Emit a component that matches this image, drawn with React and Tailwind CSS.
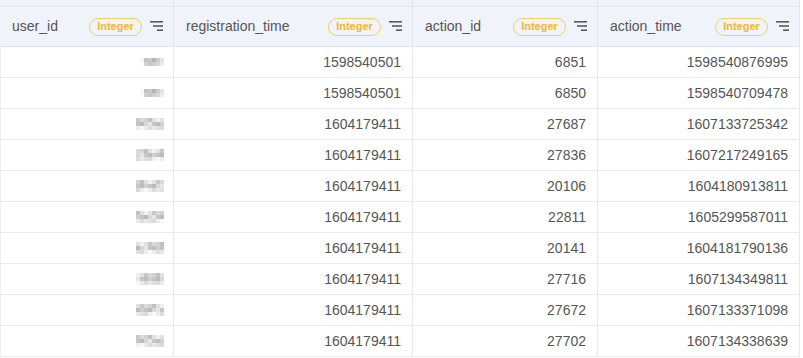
import React from "react";

const rows = [
  ["1598540501", "6851", "1598540876995", 0],
  ["1598540501", "6850", "1598540709478", 0],
  ["1604179411", "27687", "1607133725342", 1],
  ["1604179411", "27836", "1607217249165", 1],
  ["1604179411", "20106", "1604180913811", 1],
  ["1604179411", "22811", "1605299587011", 1],
  ["1604179411", "20141", "1604181790136", 1],
  ["1604179411", "27716", "1607134349811", 1],
  ["1604179411", "27672", "1607133371098", 1],
  ["1604179411", "27702", "1607134338639", 1],
];

const shadesA = [
  ["#f6f6f6", "#c2c2c2", "#c9c9c9", "#b4b4b4", "#cccccc", "#e4e4e4"],
  ["#fbfbfb", "#d2d2d2", "#c8c8c8", "#cfcfcf", "#d9d9d9", "#ebebeb"],
];
const shadesB = [
  ["#f0f0f0", "#e2e2e2", "#c8c8c8", "#dadada", "#d2d2d2", "#c0c0c0", "#e0e0e0"],
  ["#e6e6e6", "#c6c6c6", "#bdbdbd", "#d0d0d0", "#c4c4c4", "#bababa", "#d8d8d8"],
  ["#f8f8f8", "#ebebeb", "#dcdcdc", "#e8e8e8", "#e0e0e0", "#dadada", "#eeeeee"],
];

function Blur({ kind, seed }) {
  const sh = kind === 0 ? shadesA : shadesB;
  return (
    <div className="flex flex-col">
      {sh.map((r, i) => (
        <div key={i} className="flex">
          {r.map((c, j) => {
            const k = (j + seed * (i + 1)) % r.length;
            return <div key={j} className="w-[4px] h-[4px]" style={{ background: kind === 0 ? c : r[k] }} />;
          })}
        </div>
      ))}
    </div>
  );
}

function FilterIcon() {
  return (
    <svg width="13" height="11" viewBox="0 0 13 11" className="shrink-0">
      <rect x="0" y="0" width="13" height="1.6" fill="#5a5a5a" />
      <rect x="3" y="4.2" width="10" height="1.6" fill="#5a5a5a" />
      <rect x="7" y="8.4" width="6" height="1.6" fill="#5a5a5a" />
    </svg>
  );
}

function Head({ label, last }) {
  return (
    <div className={`flex items-center h-[39px] pl-[12px] ${last ? "pr-[11px]" : "pr-[10px] border-r border-[#e1e4ec]"}`}>
      <span className="text-[14px] text-[#555]">{label}</span>
      <div className="flex-1" />
      <span className="h-[18px] w-[53px] rounded-full border border-[#f3cf5c] text-[#f0b82c] text-[11px] font-bold flex items-center justify-center mr-[8px]">Integer</span>
      <FilterIcon />
    </div>
  );
}

const cols = "grid grid-cols-[174px_239px_185px_202px]";

export default function App() {
  return (
    <div className="w-[803px] h-[358px] bg-white overflow-hidden" style={{ fontFamily: '"Liberation Sans", Arial, sans-serif' }}>
      <div className="w-[800px]">
        <div className={`${cols} bg-[#f0f3fa] h-[7px] border-b border-[#e1e4ec]`}>
          <div className="border-r border-[#e1e4ec]" />
          <div className="border-r border-[#e1e4ec]" />
          <div className="border-r border-[#e1e4ec]" />
          <div className="border-r border-[#e1e4ec]" />
        </div>
        <div className={`${cols} bg-[#f0f3fa] border-b border-[#e1e4ec]`}>
          <Head label="user_id" />
          <Head label="registration_time" />
          <Head label="action_id" />
          <Head label="action_time" />
        </div>
        {rows.map((r, i) => (
          <div key={i} className={`${cols} h-[31px] border-b border-[#e8eaf0] text-[14px] text-[#555]`}>
            <div className="flex items-center justify-end pr-[9px] border-r border-[#e6e8ee] border-l border-l-[#eeeff3]">
              <Blur kind={r[3]} seed={i} />
            </div>
            <div className="flex items-center justify-end pr-[11px] border-r border-[#e6e8ee]">{r[0]}</div>
            <div className="flex items-center justify-end pr-[11px] border-r border-[#e6e8ee]">{r[1]}</div>
            <div className="flex items-center justify-end pr-[11px] border-r border-[#e6e8ee]">{r[2]}</div>
          </div>
        ))}
      </div>
    </div>
  );
}
